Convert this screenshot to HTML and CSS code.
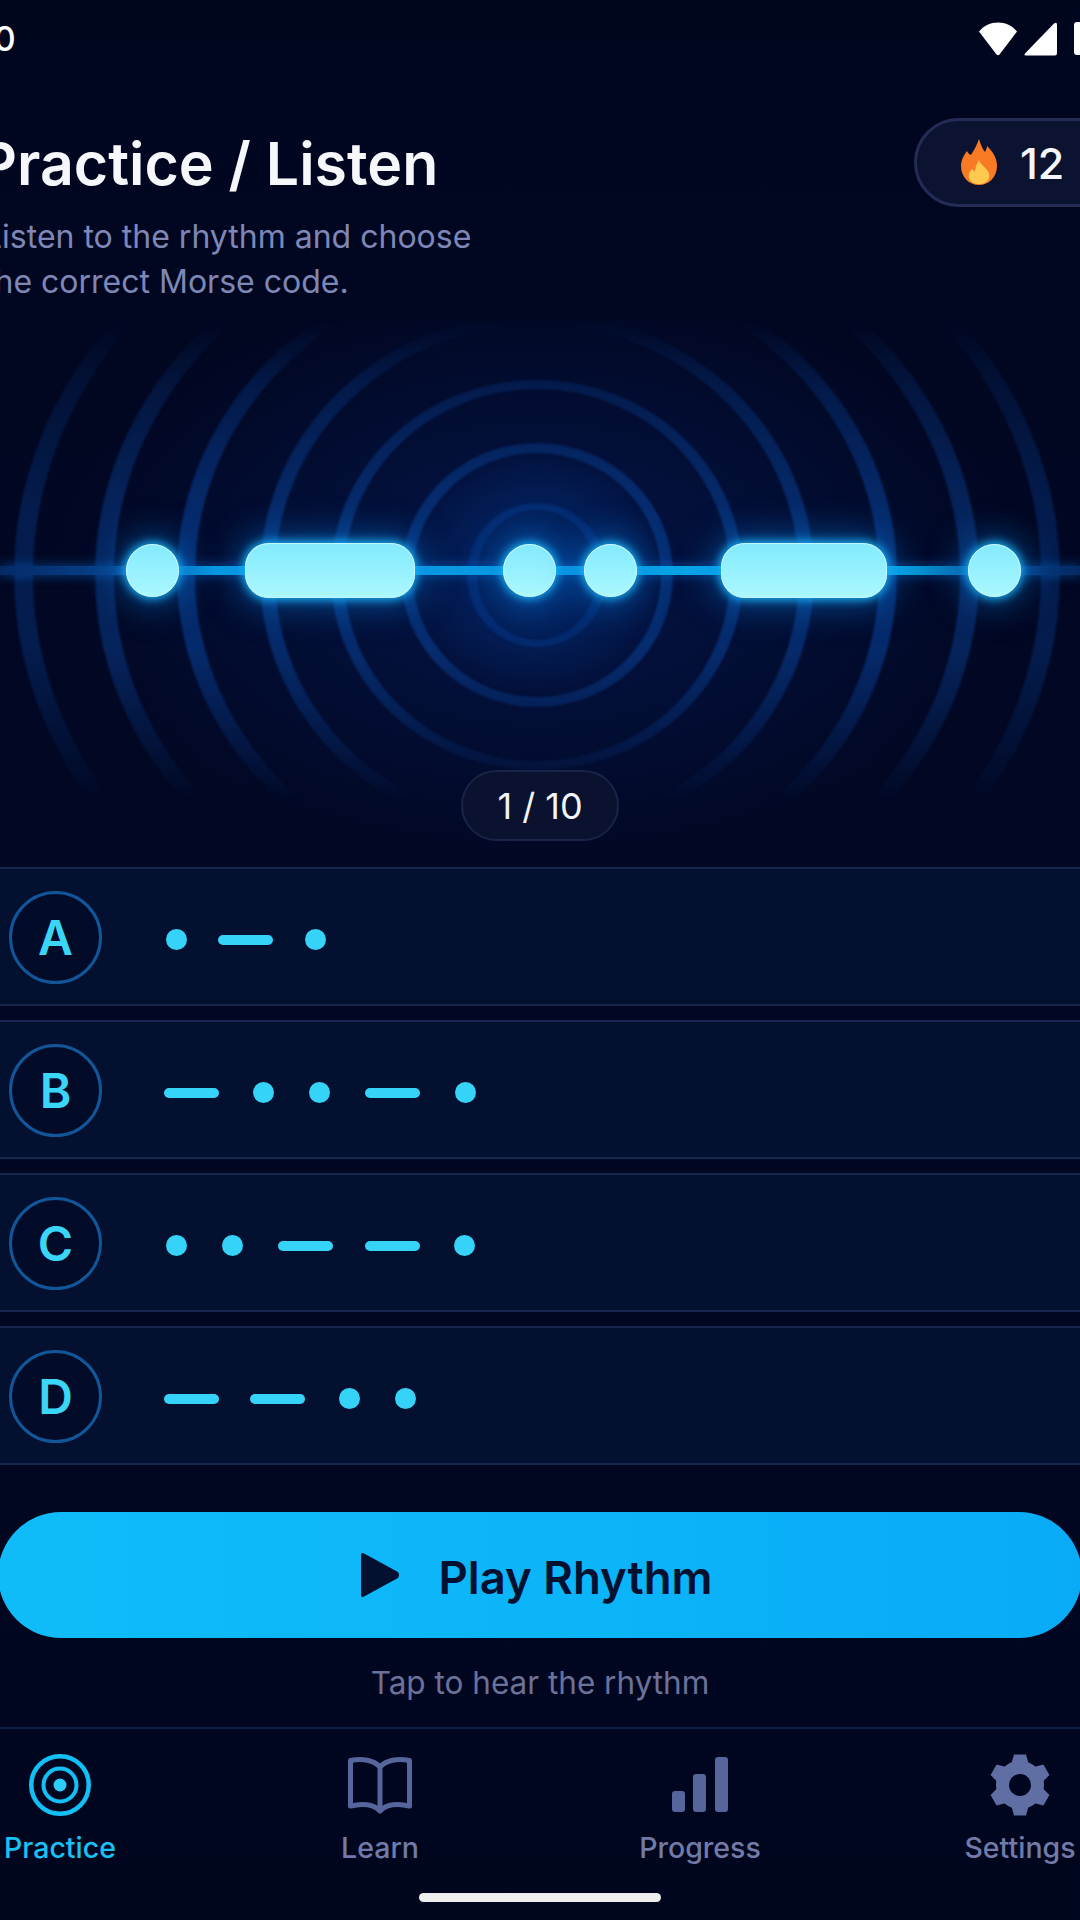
FILE: index.html
```html
<!DOCTYPE html>
<html lang="en">
<head>
<meta charset="utf-8">
<title>Practice / Listen</title>
<link rel="stylesheet" href="styles.css">
</head>
<body>
<div class="screen">
  <div class="status">
    <span class="time">12:30</span>
    <div class="status-icons">
      <svg class="wifi" width="40" height="34" viewBox="0 0 40 34"><path d="M1 9.500C6 3.500 12.500 .5 20 .5S34 3.500 39 9.500L21.500 32.500Q20 34 18.500 32.500Z" fill="#fff"/></svg>
      <svg class="signal" width="35" height="34" viewBox="0 0 35 34"><path d="M31 1.500Q34 -.500 34 3V31Q34 33.500 32 33.500H3Q.5 33.500 2 31.500Z" fill="#fff"/></svg>
      <span class="battery"></span>
    </div>
  </div>

  <header class="header">
    <div class="heading">
      <h1 class="title">Practice / Listen</h1>
      <p class="sub">Listen to the rhythm and choose<br>the correct Morse code.</p>
    </div>
    <div class="streak">
      <svg class="flame" width="38" height="46" viewBox="0 0 38 46">
        <path d="M19 0C21 6 22 9 25 13C26 11 27 9 27 7C33 13 37 19 37 27C37 38 29 46 19 46S1 38 1 27C1 21 4 16 7 12C8 14 9 15 11 16C14 11 17 6 19 0Z" fill="#f97a24"/>
        <path d="M19 21C20 25 24 27 27 31C29 34 30 36 29 39C28 43 24 45 19 45S10 43 9 39C8 35 10 32 12 30C13 31 14 32 15 32C15 28 17 25 19 21Z" fill="#fdc94e"/>
      </svg>
      <span class="streak-num">12</span>
    </div>
  </header>

  <section class="stage">
    <svg class="rings" width="1080" height="547" viewBox="0 320 1080 547">
      <defs>
        <linearGradient id="fade" x1="0" y1="320" x2="0" y2="867" gradientUnits="userSpaceOnUse">
          <stop offset="0" stop-color="#fff" stop-opacity="0"/>
          <stop offset=".12" stop-color="#fff" stop-opacity=".5"/>
          <stop offset=".35" stop-color="#fff" stop-opacity="1"/>
          <stop offset=".6" stop-color="#fff" stop-opacity="1"/>
          <stop offset=".78" stop-color="#fff" stop-opacity=".38"/>
          <stop offset=".88" stop-color="#fff" stop-opacity="0"/>
        </linearGradient>
        <mask id="ringMask" maskUnits="userSpaceOnUse" x="0" y="320" width="1080" height="547">
          <rect x="0" y="320" width="1080" height="547" fill="url(#fade)"/>
        </mask>
      </defs>
      <g mask="url(#ringMask)">
      <g transform="translate(-3 0)" fill-rule="evenodd" fill="#0a46a0">
        <path opacity=".35" d="M470 575a70 72 0 1 0 140 0a70 72 0 1 0-140 0ZM480 575a60 65 0 1 0 120 0a60 65 0 1 0-120 0Z"/>
        <path opacity=".52" d="M404 575a136 132 0 1 0 272 0a136 132 0 1 0-272 0ZM416 575a124 122 0 1 0 248 0a124 122 0 1 0-248 0Z"/>
        <path opacity=".52" d="M334 575a206 195 0 1 0 412 0a206 195 0 1 0-412 0ZM347 575a193 186 0 1 0 386 0a193 186 0 1 0-386 0Z"/>
        <path opacity=".52" d="M263 575a277 262 0 1 0 554 0a277 262 0 1 0-554 0ZM278 575a262 250 0 1 0 524 0a262 250 0 1 0-524 0Z"/>
        <path opacity=".55" d="M180 575a360 322 0 1 0 720 0a360 322 0 1 0-720 0ZM198 575a342 310 0 1 0 684 0a342 310 0 1 0-684 0Z"/>
        <path opacity=".45" d="M98 575a442 376 0 1 0 884 0a442 376 0 1 0-884 0ZM117 575a423 364 0 1 0 846 0a423 364 0 1 0-846 0Z"/>
        <path opacity=".34" d="M17 575a523 435 0 1 0 1046 0a523 435 0 1 0-1046 0ZM36 575a504 423 0 1 0 1008 0a504 423 0 1 0-1008 0Z"/>
      </g>
      </g>
    </svg>
    <div class="signal-row">
      <span class="wire"></span>
      <span class="pulse dot"></span>
      <span class="pulse dash gap-66"></span>
      <span class="pulse dot gap-88"></span>
      <span class="pulse dot gap-28"></span>
      <span class="pulse dash gap-84"></span>
      <span class="pulse dot gap-81"></span>
    </div>
    <div class="counter">1 / 10</div>
  </section>

  <div class="options">
    <div class="option">
      <span class="badge">A</span>
      <div class="morse">
        <i class="m-dot"></i><i class="m-dash g31"></i><i class="m-dot g32"></i>
      </div>
    </div>
    <div class="option">
      <span class="badge">B</span>
      <div class="morse">
        <i class="m-dash"></i><i class="m-dot g34"></i><i class="m-dot g35"></i><i class="m-dash g35"></i><i class="m-dot g35"></i>
      </div>
    </div>
    <div class="option">
      <span class="badge">C</span>
      <div class="morse">
        <i class="m-dot"></i><i class="m-dot g35"></i><i class="m-dash g35"></i><i class="m-dash g32"></i><i class="m-dot g34"></i>
      </div>
    </div>
    <div class="option">
      <span class="badge">D</span>
      <div class="morse">
        <i class="m-dash"></i><i class="m-dash g31"></i><i class="m-dot g34"></i><i class="m-dot g35"></i>
      </div>
    </div>
  </div>

  <button class="play" type="button">
    <svg width="40" height="46" viewBox="0 0 40 46"><path d="M1 4Q1 -1 5 2L38 20Q40 23 38 26L5 44Q1 47 1 42Z" fill="#03102f"/></svg>
    <span>Play Rhythm</span>
  </button>
  <p class="hint">Tap to hear the rhythm</p>

  <nav class="nav">
    <div class="tab active">
      <svg class="tab-icon" width="62" height="62" viewBox="0 0 62 62" fill="none" stroke="#12c0f5">
        <circle cx="31" cy="31" r="28.750" stroke-width="4.500"/>
        <circle cx="31" cy="31" r="16.500" stroke-width="4"/>
        <circle cx="31" cy="31" r="6.500" fill="#2ccdf8" stroke="none"/>
      </svg>
      <span>Practice</span>
    </div>
    <div class="tab">
      <svg class="tab-icon" width="66" height="62" viewBox="0 0 66 62" fill="none" stroke="#56659b" stroke-width="5" stroke-linejoin="round">
        <path d="M33 13C27 6 15 4 3.500 6.500V52C15 49 27 50 33 57C39 50 51 49 62.500 52V6.500C51 4 39 6 33 13V57"/>
      </svg>
      <span>Learn</span>
    </div>
    <div class="tab">
      <svg class="tab-icon" width="56" height="62" viewBox="0 0 56 62" fill="#56659b">
        <rect x="0" y="37" width="13" height="21" rx="3"/>
        <rect x="21" y="20" width="13" height="38" rx="3"/>
        <rect x="43" y="3" width="13" height="55" rx="3"/>
      </svg>
      <span>Progress</span>
    </div>
    <div class="tab">
      <svg class="tab-icon" width="62" height="62" viewBox="-31 -31 62 62" fill="#5f6ea3">
        <circle r="17.500" fill="none" stroke="#5f6ea3" stroke-width="13"/>
        <path d="M-6 -30.500H6L9 -20H-9Z"/>
        <path transform="rotate(60)" d="M-6 -30.500H6L9 -20H-9Z"/>
        <path transform="rotate(120)" d="M-6 -30.500H6L9 -20H-9Z"/>
        <path transform="rotate(180)" d="M-6 -30.500H6L9 -20H-9Z"/>
        <path transform="rotate(240)" d="M-6 -30.500H6L9 -20H-9Z"/>
        <path transform="rotate(300)" d="M-6 -30.500H6L9 -20H-9Z"/>
      </svg>
      <span>Settings</span>
    </div>
  </nav>
  <div class="home-bar"></div>
</div>
</body>
</html>
```
FILE: styles.css
```css
* { box-sizing: border-box; }
html, body { margin: 0; padding: 0; background: #01061f; }
body { font-family: Inter, "Noto Sans", sans-serif; }

.screen {
  position: relative;
  width: 1080px;
  height: 1920px;
  overflow: hidden;
  display: flex;
  flex-direction: column;
  background: linear-gradient(180deg, #01061f 0%, #020824 40%, #01061f 100%);
  color: #fff;
}

/* status bar */
.status {
  height: 78px;
  flex: none;
  display: flex;
  align-items: flex-start;
  justify-content: space-between;
  padding-top: 18px;
}
.time {
  margin-left: -73px;
  font-size: 34px;
  line-height: 42px;
  font-weight: 500;
}
.status-icons {
  display: flex;
  align-items: flex-start;
  margin-right: -38px;
  padding-top: 4px;
}
.wifi { margin-right: 5px; }
.signal { margin-right: 16px; }
.battery {
  width: 44px;
  height: 33px;
  background: #fff;
  border-radius: 3px;
}

/* header */
.header {
  flex: none;
  height: 242px;
  padding-top: 40px;
  display: flex;
  justify-content: space-between;
  align-items: flex-start;
}
.heading { margin-left: -16px; margin-top: 12px; }
.title {
  margin: 0 0 0 -5px;
  font-size: 59px;
  line-height: 68px;
  font-weight: 600;
  color: #f6f7fb;
}
.sub {
  margin: 16px 0 0;
  font-size: 32px;
  line-height: 45px;
  color: #7e87b6;
}
.streak {
  width: 210px;
  height: 89px;
  margin-right: -44px;
  display: flex;
  align-items: center;
  gap: 22px;
  padding-left: 43px;
  border: 3px solid #222c55;
  border-radius: 45px;
  background: #0c1330;
}
.flame { flex: none; margin-top: -2px; }
.streak-num {
  font-size: 43px;
  font-weight: 500;
  line-height: 48px;
  color: #f4f6fb;
}

/* wave stage */
.stage {
  position: relative;
  flex: none;
  height: 547px;
  padding-top: 223px;
  display: flex;
  flex-direction: column;
  background:
    radial-gradient(ellipse 135px 125px at 537px 250px, #032a70 0%, #03225e 40%, rgba(3, 24, 70, 0) 100%),
    radial-gradient(ellipse 480px 290px at 537px 250px, #031548 0%, rgba(2, 10, 40, 0) 100%);
}
.rings { position: absolute; left: 0; top: 0; filter: blur(.8px); }
.signal-row {
  position: relative;
  height: 55px;
  flex: none;
  display: flex;
  align-items: center;
  padding-left: 126px;
}
.wire {
  position: absolute;
  left: 0;
  right: 0;
  top: 23px;
  height: 9px;
  background: linear-gradient(90deg, #052a66 0%, #07418a 10%, #0a9be2 20%, #0a9be2 50%, #0ab2ef 82%, #07418a 93%, #052a66 100%);
  box-shadow: 0 0 12px rgba(8, 110, 215, .6);
}
.pulse {
  position: relative;
  flex: none;
  background: linear-gradient(180deg, #82eafd 0%, #abf8ff 100%);
  box-shadow:
    inset 0 0 0 1px #c4f6ff,
    0 0 10px 2px #18b0f4,
    0 0 34px 8px rgba(10, 125, 230, .5);
}
.dot { width: 53px; height: 53px; border-radius: 50%; }
.dash { height: 55px; border-radius: 24px; }
.gap-66 { margin-left: 66px; width: 170px; }
.gap-88 { margin-left: 88px; }
.gap-28 { margin-left: 28px; }
.gap-84 { margin-left: 84px; width: 166px; }
.gap-81 { margin-left: 81px; }
.counter {
  position: relative;
  align-self: center;
  width: 158px;
  height: 71px;
  margin-top: 172px;
  border: 2px solid #182448;
  border-radius: 36px;
  background: #0a1230;
  font-size: 36px;
  line-height: 68px;
  font-weight: 400;
  text-align: center;
  color: #f2f4fa;
}

/* options */
.options {
  flex: none;
  display: flex;
  flex-direction: column;
  gap: 14px;
  margin-left: -20px;
  width: 1120px;
}
.option {
  height: 139px;
  display: flex;
  align-items: center;
  padding-left: 27px;
  padding-top: 6px;
  border: 2px solid #16264f;
  background: #03102f;
}
.badge {
  flex: none;
  width: 93px;
  height: 93px;
  margin-top: -4px;
  border: 3.500px solid #12569a;
  border-radius: 50%;
  display: flex;
  align-items: center;
  justify-content: center;
  font-size: 48px;
  font-weight: 600;
  color: #3bd6f7;
  background: #020c28;
}
.morse {
  display: flex;
  align-items: center;
  margin-left: 62px;
}
.m-dot {
  flex: none;
  width: 21px;
  height: 21px;
  border-radius: 50%;
  background: #35d3f7;
}
.m-dash {
  flex: none;
  width: 55px;
  height: 10px;
  border-radius: 5px;
  background: #35d3f7;
}
.morse > .m-dot:first-child { margin-left: 2px; }
.g31 { margin-left: 31px; }
.g32 { margin-left: 32px; }
.g34 { margin-left: 34px; }
.g35 { margin-left: 35px; }

/* play */
.play {
  flex: none;
  width: 1084px;
  height: 126px;
  margin-top: 47px;
  margin-left: -2px;
  border: 0;
  border-radius: 63px;
  display: flex;
  align-items: center;
  justify-content: center;
  gap: 38px;
  padding: 0 7px 0 0;
  background: linear-gradient(90deg, #10bcf8 0%, #0cb5f8 50%, #09abf7 100%);
  font-family: inherit;
  font-size: 45.500px;
  font-weight: 600;
  color: #03102f;
}
.play span { margin-top: 4px; }
.hint {
  flex: none;
  margin: 25px 0 0;
  font-size: 31.500px;
  line-height: 39px;
  text-align: center;
  color: #6c7198;
}

/* nav */
.nav {
  flex: none;
  width: 1280px;
  margin: 25px -100px 0;
  padding-top: 25px;
  border-top: 2px solid #0f1f4a;
  display: grid;
  grid-template-columns: repeat(4, 320px);
}
.tab {
  display: flex;
  flex-direction: column;
  align-items: center;
  gap: 14px;
  font-size: 28.500px;
  line-height: 36px;
  font-weight: 500;
  color: #727ba8;
}
.tab-icon { display: block; }
.tab.active { color: #18c2f4; }
.home-bar {
  flex: none;
  align-self: center;
  width: 242px;
  height: 9px;
  margin-top: 27px;
  border-radius: 5px;
  background: #eeeeee;
}
```
